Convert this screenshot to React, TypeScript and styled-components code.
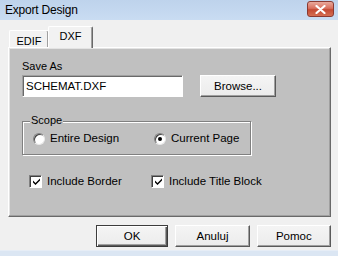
import React from 'react';
import styled, { createGlobalStyle } from 'styled-components';

const GlobalStyle = createGlobalStyle`
  html, body {
    margin: 0;
    padding: 0;
    background: #f0f0f0;
  }
  * {
    box-sizing: border-box;
  }
`;

const Window = styled.div`
  width: 338px;
  height: 256px;
  display: flex;
  flex-direction: column;
  background: #f0f0f0;
  font-family: "Liberation Sans", Arial, sans-serif;
  font-size: 11px;
  color: #000;
  overflow: hidden;
`;

const TitleBar = styled.div`
  height: 20px;
  flex: none;
  display: flex;
  align-items: center;
  justify-content: space-between;
  padding: 0 4px 0 5px;
  background: linear-gradient(#bed3ec, #c9dcf2);
`;

const Title = styled.span`
  font-size: 12px;
  color: #000;
  letter-spacing: -0.2px;
`;

const CloseButton = styled.div`
  width: 27px;
  height: 16px;
  margin-top: -2px;
  border-radius: 3px;
  border: 1px solid #8a3a32;
  background: linear-gradient(#e9a99c 0%, #d9705e 45%, #c44a33 55%, #d56e52 100%);
  display: flex;
  align-items: center;
  justify-content: center;

  svg {
    width: 11px;
    height: 9px;
  }
`;

const Body = styled.div`
  flex: 1;
  display: flex;
  flex-direction: column;
  padding: 6px 7px 0 8px;
`;

const TabRow = styled.div`
  height: 21px;
  display: flex;
  align-items: flex-end;
  padding-left: 1px;
`;

const Tab = styled.div<{ active?: boolean }>`
  position: relative;
  z-index: ${p => (p.active ? 2 : 1)};
  height: ${p => (p.active ? '22px' : '17px')};
  margin-bottom: ${p => (p.active ? '-1px' : '0')};
  padding-top: ${p => (p.active ? '3px' : '4px')};
  width: ${p => (p.active ? '45px' : '40px')};
  margin-left: ${p => (p.active ? '-1px' : '0')};
  text-align: center;
  font-size: 11px;
  line-height: 13px;
  background: #f2f2f2;
  border-top: 1px solid #fff;
  border-left: 1px solid #fff;
  border-right: 1px solid #696969;
  border-top-left-radius: 2px;
  border-top-right-radius: 2px;
  box-shadow: inset -1px 0 0 #a0a0a0;
`;

const Panel = styled.div`
  height: 170px;
  width: 323px;
  background: #c0c0c0;
  border-top: 1px solid #fff;
  border-left: 1px solid #fff;
  border-right: 1px solid #696969;
  border-bottom: 1px solid #696969;
  box-shadow: inset -1px -1px 0 #a0a0a0, inset 1px 1px 0 #e3e3e3;
  padding: 12px 0 0 13px;
  display: flex;
  flex-direction: column;
`;

const FieldLabel = styled.div`
  height: 13px;
  line-height: 13px;
  margin-bottom: 2px;
`;

const InputRow = styled.div`
  display: flex;
  align-items: center;
  gap: 17px;
`;

const TextInput = styled.div`
  width: 161px;
  height: 22px;
  background: #fff;
  border-top: 1px solid #a0a0a0;
  border-left: 1px solid #a0a0a0;
  border-right: 1px solid #fff;
  border-bottom: 1px solid #fff;
  box-shadow: inset 1px 1px 0 #696969;
  padding: 3px 0 0 3px;
  line-height: 14px;
  font-size: 11.5px;
`;

const Button = styled.div<{ w: number; isDefault?: boolean }>`
  width: ${p => p.w}px;
  height: 22px;
  display: flex;
  align-items: center;
  justify-content: center;
  background: linear-gradient(#f4f4f4, #ececec);
  border: 1px solid ${p => (p.isDefault ? '#3c3c3c' : '#f4f4f4')};
  border-top-color: ${p => (p.isDefault ? '#3c3c3c' : '#fff')};
  border-left-color: ${p => (p.isDefault ? '#3c3c3c' : '#fff')};
  border-right-color: ${p => (p.isDefault ? '#3c3c3c' : '#5a5a5a')};
  border-bottom-color: ${p => (p.isDefault ? '#3c3c3c' : '#5a5a5a')};
  box-shadow: ${p =>
    p.isDefault
      ? 'inset 1px 1px 0 #fff, inset -1px -1px 0 #5a5a5a, inset -2px -2px 0 #a0a0a0'
      : 'inset -1px -1px 0 #a0a0a0'};
  font-size: 11.5px;
`;

const GroupBox = styled.div`
  position: relative;
  margin-top: 24px;
  width: 229px;
  height: 34px;
  border: 1px solid #808080;
  box-shadow: inset 1px 1px 0 #fff, 1px 1px 0 #fff;
  padding: 10px 0 0 10px;
`;

const Legend = styled.span`
  position: absolute;
  top: -8px;
  left: 7px;
  padding: 0 1px;
  background: #c0c0c0;
  line-height: 13px;
`;

const OptionRow = styled.div<{ cols: string }>`
  display: grid;
  grid-template-columns: ${p => p.cols};
  align-items: center;
`;

const Option = styled.div`
  display: flex;
  align-items: center;
  gap: 5px;
  line-height: 13px;
  font-size: 11.5px;
`;

const RadioMark = styled.span<{ checked?: boolean }>`
  width: 12px;
  height: 12px;
  border-radius: 50%;
  background: #fff;
  border: 1px solid;
  border-color: #808080 #e8e8e8 #e8e8e8 #808080;
  box-shadow: inset 1px 1px 0 #404040;
  display: flex;
  align-items: center;
  justify-content: center;

  &::after {
    content: '';
    width: 4px;
    height: 4px;
    border-radius: 50%;
    background: ${p => (p.checked ? '#000' : 'transparent')};
  }
`;

const CheckMark = styled.span`
  width: 13px;
  height: 13px;
  background: #fff;
  border: 1px solid;
  border-color: #808080 #fff #fff #808080;
  box-shadow: inset 1px 1px 0 #404040;
  display: flex;
  align-items: center;
  justify-content: center;

  svg {
    width: 7px;
    height: 7px;
    margin-left: 1px;
  }
`;

const CheckRow = styled(OptionRow)`
  margin-top: 20px;
  padding-left: 7px;
`;

const Footer = styled.div`
  display: flex;
  gap: 7px;
  padding-left: 88px;
  margin-top: 8px;
`;

const BottomStrip = styled.div`
  height: 6px;
  flex: none;
  margin-top: auto;
  background: #dbe6f3;
  border-top: 1px solid #e6edf6;
`;

const Check = () => (
  <svg viewBox="0 0 7 7">
    <path d="M0 2.5 L2.5 5 L7 0.5 L7 2.5 L2.5 7 L0 4.5 Z" fill="#000" />
  </svg>
);

const App: React.FC = () => {
  return (
    <Window>
      <GlobalStyle />
      <TitleBar>
        <Title>Export Design</Title>
        <CloseButton>
          <svg viewBox="0 0 11 9">
            <path d="M1.5 1 L9.5 8 M9.5 1 L1.5 8" stroke="#fff" strokeWidth="2.2" strokeLinecap="round" />
          </svg>
        </CloseButton>
      </TitleBar>
      <Body>
        <TabRow>
          <Tab>EDIF</Tab>
          <Tab active>DXF</Tab>
        </TabRow>
        <Panel>
          <FieldLabel>Save As</FieldLabel>
          <InputRow>
            <TextInput>SCHEMAT.DXF</TextInput>
            <Button w={76}>Browse...</Button>
          </InputRow>
          <GroupBox>
            <Legend>Scope</Legend>
            <OptionRow cols="121px auto">
              <Option>
                <RadioMark />
                Entire Design
              </Option>
              <Option>
                <RadioMark checked />
                Current Page
              </Option>
            </OptionRow>
          </GroupBox>
          <CheckRow cols="122px auto">
            <Option>
              <CheckMark>
                <Check />
              </CheckMark>
              Include Border
            </Option>
            <Option>
              <CheckMark>
                <Check />
              </CheckMark>
              Include Title Block
            </Option>
          </CheckRow>
        </Panel>
        <Footer>
          <Button w={73} isDefault>OK</Button>
          <Button w={75}>Anuluj</Button>
          <Button w={75}>Pomoc</Button>
        </Footer>
      </Body>
      <BottomStrip />
    </Window>
  );
};

export default App;
